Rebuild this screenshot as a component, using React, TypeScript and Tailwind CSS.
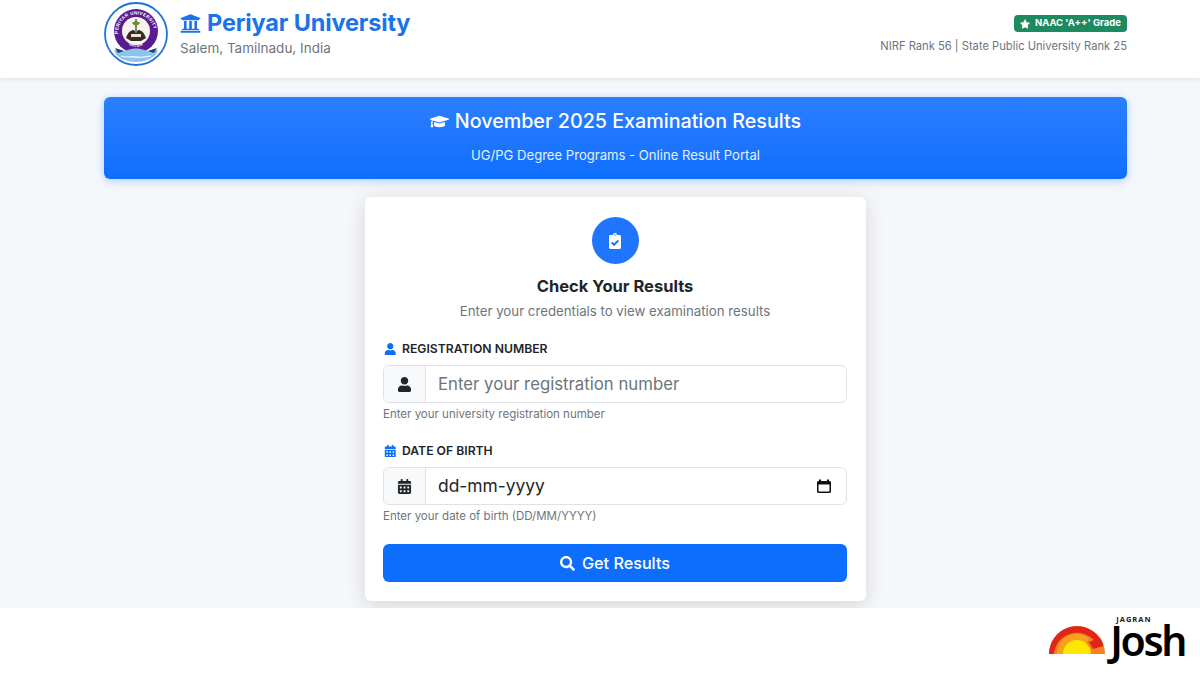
import { FaCalendarAlt, FaClipboardCheck, FaGraduationCap, FaSearch, FaStar, FaUniversity, FaUser } from "react-icons/fa";
import type { ReactNode } from "react";

function UniversitySeal() {
  return (
    <svg viewBox="0 0 64 64" className="h-16 w-16 shrink-0">
      <defs>
        <path id="seal-top" d="M14.600 35A18 18 0 1 1 49.400 35" />
        <path id="seal-bottom" d="M22 41a15.500 15.500 0 0 0 20 0" />
      </defs>
      <circle cx="32" cy="32" r="31" fill="#fff" stroke="#1f74d6" strokeWidth="1.8" />
      <circle cx="32" cy="29" r="22" fill="#5b1a8e" />
      <circle cx="32" cy="29" r="14" fill="#f7f4ee" />
      <path d="M22 36c2-6 5-8 8-8l2 3 2-3c3 0 6 2 8 8l-5 3H27z" fill="#3b2a22" />
      <path d="M27 32h10v3H27z" fill="#e9e4d6" />
      <path d="M32 17v14" stroke="#4b6b2a" strokeWidth="1.5" />
      <path d="M28 21c2-2 6-2 8 0-2 3-6 3-8 0z" fill="#5f8d35" />
      <text fontFamily="'Liberation Sans', sans-serif" fontSize="4.700" fontWeight="700" fill="#fff" letterSpacing="0.25">
        <textPath href="#seal-top" startOffset="5%">PERIYAR UNIVERSITY</textPath>
      </text>
      <text fontFamily="'Liberation Sans', sans-serif" fontSize="4" fontWeight="700" fill="#fff" letterSpacing="0.2">
        <textPath href="#seal-bottom" startOffset="14%">SALEM</textPath>
      </text>
      <path d="M10 49c6-3 9 1 14-1s11-2 16 0 9-2 14 1c-3 7-12 11-22 11s-19-4-22-11z" fill="#8cc3ef" />
      <path d="M11 46l9 3-6 2zM53 46l-9 3 6 2z" fill="#1d3f6e" />
      <path d="M17 54c5 2 9 0 15 1s10 0 15-1" fill="none" stroke="#e8f3fc" strokeWidth="1.300" />
    </svg>
  );
}

function JoshLogo() {
  return (
    <div className="flex items-end">
      <svg viewBox="0 0 58 30" className="mb-[2px] mr-[3px] h-[30px] w-[58px]">
        <path d="M0 29a28 28 0 0 1 56 0z" fill="#f58220" />
        <path d="M0 29a28 28 0 0 1 50.500-16.500L45.500 16A23 23 0 0 0 5 29z" fill="#e1251b" />
        <path d="M40 17l11-4.500A28 28 0 0 1 54.500 21L44 24z" fill="#e1251b" />
        <path d="M8 29a20 20 0 0 1 32-16l-4 8-3 8z" fill="#f9a11b" />
        <path d="M14 29a14 14 0 0 1 28 0z" fill="#ffe600" />
      </svg>
      <div className="flex flex-col">
        <span className="ml-[6px] font-['Open_Sans',sans-serif] text-[7.5px] font-bold leading-[8px] tracking-[1px] text-[#1a1a1a]">JAGRAN</span>
        <span className="font-['Noto_Sans',sans-serif] text-[41px] font-semibold leading-[34px] tracking-[-2.4px] text-black">Josh</span>
      </div>
    </div>
  );
}

function Field({ icon, label, help, children, labelIcon }: { icon: ReactNode; labelIcon: ReactNode; label: string; help: string; children: ReactNode }) {
  return (
    <div>
      <div className="flex h-5 items-center text-[12.2px] font-semibold text-[#212529]">
        <span className="flex w-[19px] pl-px text-[12.5px] text-[#0d6efd]">{labelIcon}</span>
        {label}
      </div>
      <div className="mt-[6px] flex h-[38px] rounded-md border border-[#dee2e6] bg-white">
        <div className="flex w-[42px] items-center justify-center rounded-l-md border-r border-[#dee2e6] bg-[#f8f9fa] text-[15px] text-[#212529]">
          {icon}
        </div>
        {children}
      </div>
      <p className="mt-[3px] text-[11.5px] leading-[16px] text-[#6c757d]">{help}</p>
    </div>
  );
}

export default function App() {
  return (
    <div className="flex h-[675px] w-[1200px] flex-col overflow-hidden bg-white font-['Inter',sans-serif]">
      <header className="relative z-10 h-[78px] shrink-0 bg-white shadow-[0_2px_4px_rgba(0,0,0,0.07)]">
        <div className="ml-[104px] flex w-[1023px] justify-between pt-[2px]">
          <div className="flex gap-3">
            <UniversitySeal />
            <div className="pt-[7px]">
              <h1 className="flex items-center gap-[6px] text-[23.5px] font-bold leading-[28px] tracking-[-0.15px] text-[#1a73e8]">
                <FaUniversity className="text-[21px]" />
                Periyar University
              </h1>
              <p className="mt-[2px] text-[13.5px] leading-[18px] text-[#6c757d]">Salem, Tamilnadu, India</p>
            </div>
          </div>
          <div className="flex flex-col items-end pt-[13px]">
            <span className="flex h-[17px] items-center gap-[5px] rounded-[4px] bg-[#1e8a5f] px-[6px] text-[9.5px] font-bold text-white">
              <FaStar className="text-[10px]" />
              NAAC 'A++' Grade
            </span>
            <p className="mt-[5px] text-[11.2px] leading-[18px] text-[#6c757d]">NIRF Rank 56 | State Public University Rank 25</p>
          </div>
        </div>
      </header>

      <main className="h-[530px] shrink-0 overflow-hidden bg-[#f5f7fb] pt-[19px]">
        <div className="ml-[104px] w-[1023px]">
          <section className="flex h-[82px] flex-col items-center rounded-md bg-gradient-to-b from-[#2b7fff] to-[#0d6efd] pt-[10px] text-white shadow-[0_2px_8px_rgba(13,110,253,0.3)]">
            <h2 className="flex items-center gap-[6px] text-[19.7px] font-medium leading-[28px]">
              <FaGraduationCap className="text-[19px]" />
              November 2025 Examination Results
            </h2>
            <p className="mt-[9px] text-[13.1px] leading-[22px] text-[#e6f0ff]">UG/PG Degree Programs - Online Result Portal</p>
          </section>

          <section className="mx-auto mt-[18px] w-[501px] rounded-md bg-white pb-[19px] pl-[18px] pr-[19px] pt-[20px] shadow-[0_4px_20px_rgba(0,0,0,0.14)]">
            <div className="flex flex-col items-center">
              <div className="flex h-[47px] w-[47px] items-center justify-center rounded-full bg-[#1f75fe] text-[16px] text-white">
                <FaClipboardCheck />
              </div>
              <h3 className="mt-[10px] text-[16.5px] font-bold leading-[24px] text-[#212529]">Check Your Results</h3>
              <p className="mt-[3px] text-[13.25px] leading-[20px] text-[#6c757d]">Enter your credentials to view examination results</p>
            </div>

            <div className="mt-[18px]">
              <Field icon={<FaUser />} labelIcon={<FaUser />} label="REGISTRATION NUMBER" help="Enter your university registration number">
                <input
                  placeholder="Enter your registration number"
                  className="min-w-0 flex-1 bg-transparent pl-3 pt-px text-[16.75px] outline-none placeholder:text-[#6c757d]"
                />
              </Field>
            </div>
            <div className="mt-[19px]">
              <Field icon={<FaCalendarAlt />} labelIcon={<FaCalendarAlt />} label="DATE OF BIRTH" help="Enter your date of birth (DD/MM/YYYY)">
                <div className="flex flex-1 items-center justify-between pl-3 pr-[14px] text-[17.4px] text-[#212529]">
                  dd-mm-yyyy
                  <svg viewBox="0 0 16 16" className="h-4 w-4" fill="#111">
                    <path d="M3 1.500h2V3h6V1.500h2V3h.5A1.500 1.500 0 0 1 15 4.500v9a1.500 1.500 0 0 1-1.500 1.500h-11A1.500 1.500 0 0 1 1 13.500v-9A1.500 1.500 0 0 1 2.500 3H3zM2.500 6.500v7h11v-7z" />
                  </svg>
                </div>
              </Field>
            </div>
            <button className="mt-[20px] flex h-[38px] w-full items-center justify-center gap-[7px] rounded-md bg-[#0d6efd] text-[16.2px] font-medium text-white">
              <FaSearch className="text-[15px]" />
              Get Results
            </button>
          </section>
        </div>
      </main>

      <footer className="flex flex-1 items-start justify-end pr-[15px] pt-[7px]">
        <JoshLogo />
      </footer>
    </div>
  );
}
